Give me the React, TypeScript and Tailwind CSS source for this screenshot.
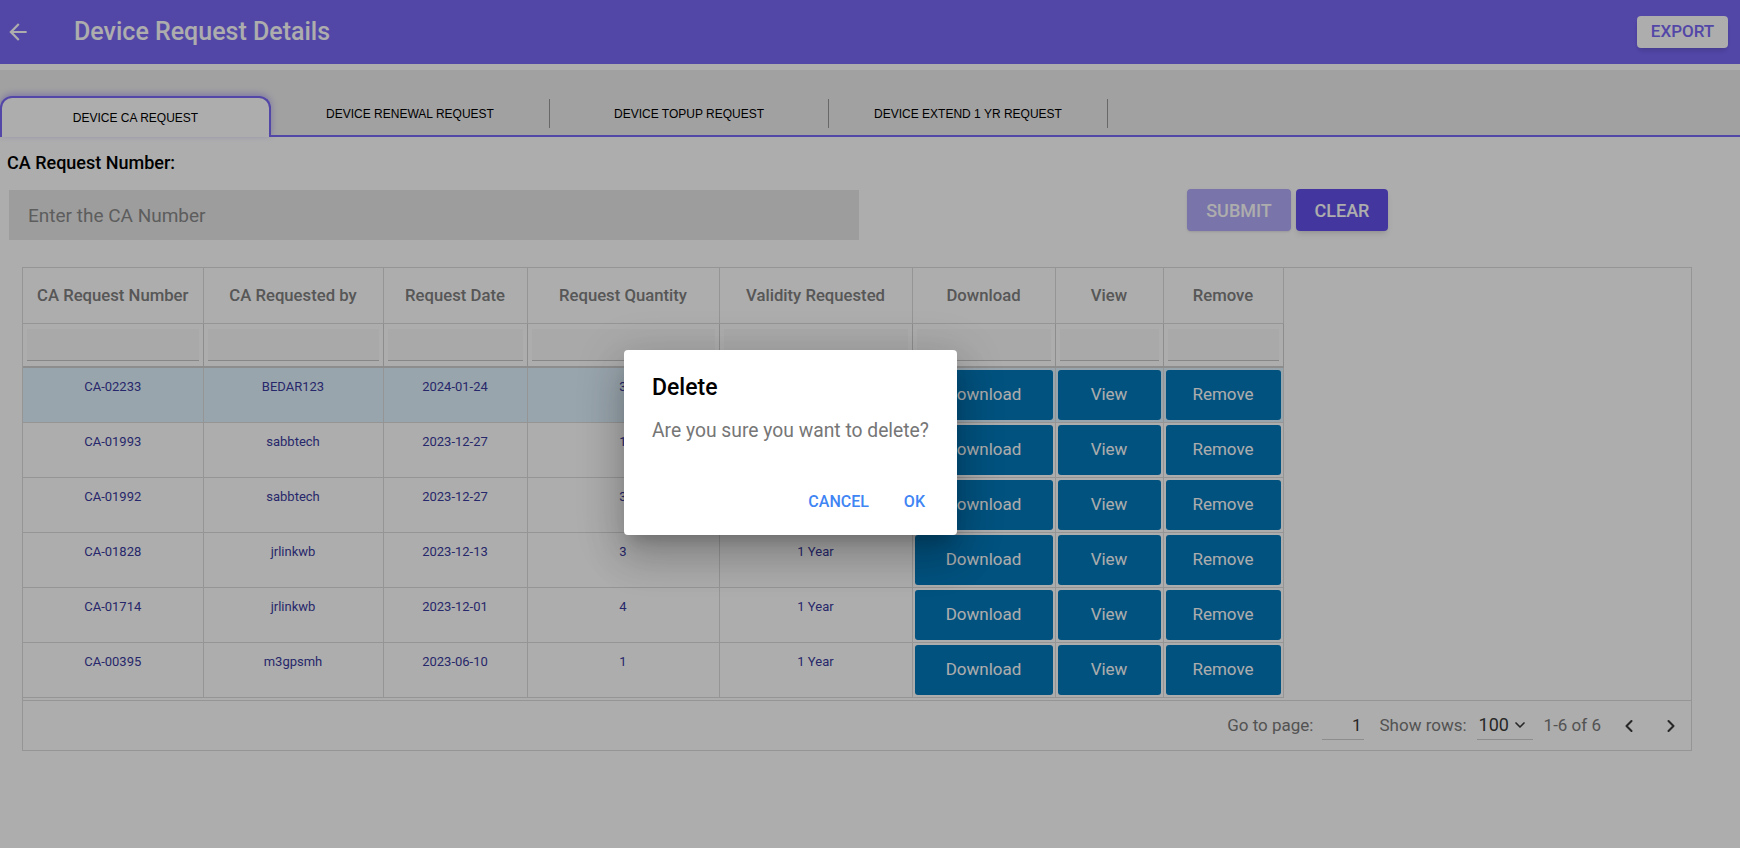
import React from 'react';
import clsx from 'clsx';
import { ChevronDown, ChevronLeft, ChevronRight } from 'lucide-react';

interface CaRequest {
  number: string;
  requestedBy: string;
  date: string;
  quantity: number;
  validity: string;
}

const requests: CaRequest[] = [
  { number: 'CA-02233', requestedBy: 'BEDAR123', date: '2024-01-24', quantity: 3, validity: '1 Year' },
  { number: 'CA-01993', requestedBy: 'sabbtech', date: '2023-12-27', quantity: 1, validity: '1 Year' },
  { number: 'CA-01992', requestedBy: 'sabbtech', date: '2023-12-27', quantity: 3, validity: '1 Year' },
  { number: 'CA-01828', requestedBy: 'jrlinkwb', date: '2023-12-13', quantity: 3, validity: '1 Year' },
  { number: 'CA-01714', requestedBy: 'jrlinkwb', date: '2023-12-01', quantity: 4, validity: '1 Year' },
  { number: 'CA-00395', requestedBy: 'm3gpsmh', date: '2023-06-10', quantity: 1, validity: '1 Year' },
];

const tabs = [
  'DEVICE CA REQUEST',
  'DEVICE RENEWAL REQUEST',
  'DEVICE TOPUP REQUEST',
  'DEVICE EXTEND 1 YR REQUEST',
];

const columns = [
  { label: 'CA Request Number', width: 'w-[180px]' },
  { label: 'CA Requested by', width: 'w-[180px]' },
  { label: 'Request Date', width: 'w-[144px]' },
  { label: 'Request Quantity', width: 'w-[192px]' },
  { label: 'Validity Requested', width: 'w-[193px]' },
  { label: 'Download', width: 'w-[143px]' },
  { label: 'View', width: 'w-[108px]' },
  { label: 'Remove', width: 'w-[120px]' },
];

const ActionButton: React.FC<{ label: string }> = ({ label }) => (
  <button className="w-full h-[50px] rounded-[3px] bg-[#0479bb] text-white text-[17px]">
    {label}
  </button>
);

const App: React.FC = () => {
  return (
    <div className="relative w-full h-[848px] bg-white overflow-hidden font-['Roboto',sans-serif]">
      {/* header */}
      <header className="h-16 bg-[#7a68f7] flex items-center pl-[5px] pr-3">
        <svg viewBox="0 0 24 24" className="w-[26px] h-[26px] fill-white">
          <path d="M20 11H7.83l5.59-5.59L12 4l-8 8 8 8 1.41-1.41L7.83 13H20v-2z" />
        </svg>
        <h1 className="ml-[43px] text-white text-[25px] font-medium">Device Request Details</h1>
        <button className="ml-auto h-8 w-[91px] rounded-[4px] bg-white text-[#7a68f7] text-[17px] font-medium shadow-md">
          EXPORT
        </button>
      </header>

      {/* tabs */}
      <div className="mt-[6px] h-[67px] bg-[#ededed] border-b-2 border-[#7a68f7] flex items-end">
        {tabs.map((tab, i) =>
          i === 0 ? (
            <div
              key={tab}
              className="-mb-[2px] w-[271px] h-[41px] bg-white border-2 border-b-0 border-[#7a68f7] rounded-t-xl flex items-center justify-center shadow-[0_-2px_6px_rgba(122,104,247,0.45)] font-['Liberation_Sans',sans-serif] text-[12px] font-medium text-black"
            >
              {tab}
            </div>
          ) : (
            <div key={tab} className="w-[279px] h-[39px] mb-[2px] flex items-center">
              <span className="flex-1 text-center font-['Liberation_Sans',sans-serif] text-[12px] font-medium text-black">
                {tab}
              </span>
              <span className="h-[29px] border-r border-[#9a9a9a]" />
            </div>
          )
        )}
      </div>

      {/* search */}
      <div className="px-[7px] pt-[14px]">
        <label className="block text-[18px] font-medium text-black leading-6">CA Request Number:</label>
        <div className="mt-[15px] flex items-start">
          <input
            className="ml-[2px] w-[850px] h-[50px] bg-[#e8e8e8] px-[19px] text-[19px] outline-none placeholder:text-[#8a8a8a]"
            placeholder="Enter the CA Number"
          />
          <div className="ml-[328px] -mt-px flex gap-[5px]">
            <button className="w-[104px] h-[42px] rounded-[4px] bg-[#b3abfb] text-white text-[18px] font-medium shadow-sm">
              SUBMIT
            </button>
            <button className="w-[92px] h-[42px] rounded-[4px] bg-[#6352eb] text-white text-[18px] font-medium shadow-md">
              CLEAR
            </button>
          </div>
        </div>
      </div>

      {/* table */}
      <div className="mt-[27px] ml-[22px] w-[1670px] border border-[#dcdcdc]">
        <table className="table-fixed border-collapse">
          <thead>
            <tr className="h-[55px]">
              {columns.map((col) => (
                <th
                  key={col.label}
                  className={clsx(col.width, 'border-r border-b border-[#dcdcdc] text-[16.7px] font-medium text-[#808080]')}
                >
                  {col.label}
                </th>
              ))}
            </tr>
            <tr className="h-[44px]">
              {columns.map((col) => (
                <th key={col.label} className="border-r border-b-2 border-[#d0d0d0] px-[4px] pt-[5px] pb-[5px]">
                  <input className="w-full h-[32px] bg-[#f9f9f9] border-b border-[#c8c8c8] outline-none" />
                </th>
              ))}
            </tr>
          </thead>
          <tbody>
            {requests.map((row, i) => (
              <tr key={row.number} className={clsx('h-[55px]', i === 0 && 'bg-[#e2f4ff]')}>
                {[row.number, row.requestedBy, row.date, String(row.quantity), row.validity].map((v, j) => (
                  <td
                    key={j}
                    className="align-top pt-[11px] text-center text-[13px] leading-[15px] text-[#3a3a9e] border-r border-b border-[#dcdcdc]"
                  >
                    {v}
                  </td>
                ))}
                <td className="p-[2px] border-r border-b border-[#dcdcdc]">
                  <ActionButton label="Download" />
                </td>
                <td className="p-[2px] border-r border-b border-[#dcdcdc]">
                  <ActionButton label="View" />
                </td>
                <td className="p-[2px] border-r border-b border-[#dcdcdc]">
                  <ActionButton label="Remove" />
                </td>
              </tr>
            ))}
          </tbody>
        </table>

        {/* pager */}
        <div className="h-[50px] mt-[2px] border-t border-[#dcdcdc] flex items-center justify-end pr-[10px] text-[17px] text-[#7a7a7a]">
          <span>Go to page:</span>
          <span className="ml-[9px] w-[42px] border-b border-[#d0d0d0] text-right pr-[3px] text-[#3a3a3a] leading-7">1</span>
          <span className="ml-[15px]">Show rows:</span>
          <span className="ml-[10px] w-[56px] border-b border-[#d0d0d0] flex items-center text-[18px] text-[#3a3a3a] leading-7 pl-[2px]">
            100
            <ChevronDown className="w-4 h-4 ml-[3px]" strokeWidth={2.5} />
          </span>
          <span className="ml-[11px]">1-6 of 6</span>
          <ChevronLeft className="ml-[18px] w-5 h-5 text-[#3a3a3a]" strokeWidth={2.5} />
          <ChevronRight className="ml-[22px] w-5 h-5 text-[#3a3a3a]" strokeWidth={2.5} />
        </div>
      </div>

      {/* backdrop */}
      <div className="absolute inset-0 bg-black/[0.32]" />

      {/* dialog */}
      <div className="absolute left-[624px] top-[350px] w-[333px] h-[185px] bg-white rounded-[4px] shadow-[0_11px_15px_-7px_rgba(0,0,0,0.2),0_24px_38px_3px_rgba(0,0,0,0.14),0_9px_46px_8px_rgba(0,0,0,0.12)] px-7 pt-[22px]">
        <h2 className="text-[23px] font-medium text-black leading-8">Delete</h2>
        <p className="mt-[15px] text-[19.3px] text-[#767676] leading-6">Are you sure you want to delete?</p>
        <div className="mt-[47px] flex justify-end gap-[35px] pr-[4px] text-[16px] font-medium text-[#3f85f4]">
          <button>CANCEL</button>
          <button>OK</button>
        </div>
      </div>
    </div>
  );
};

export default App;
